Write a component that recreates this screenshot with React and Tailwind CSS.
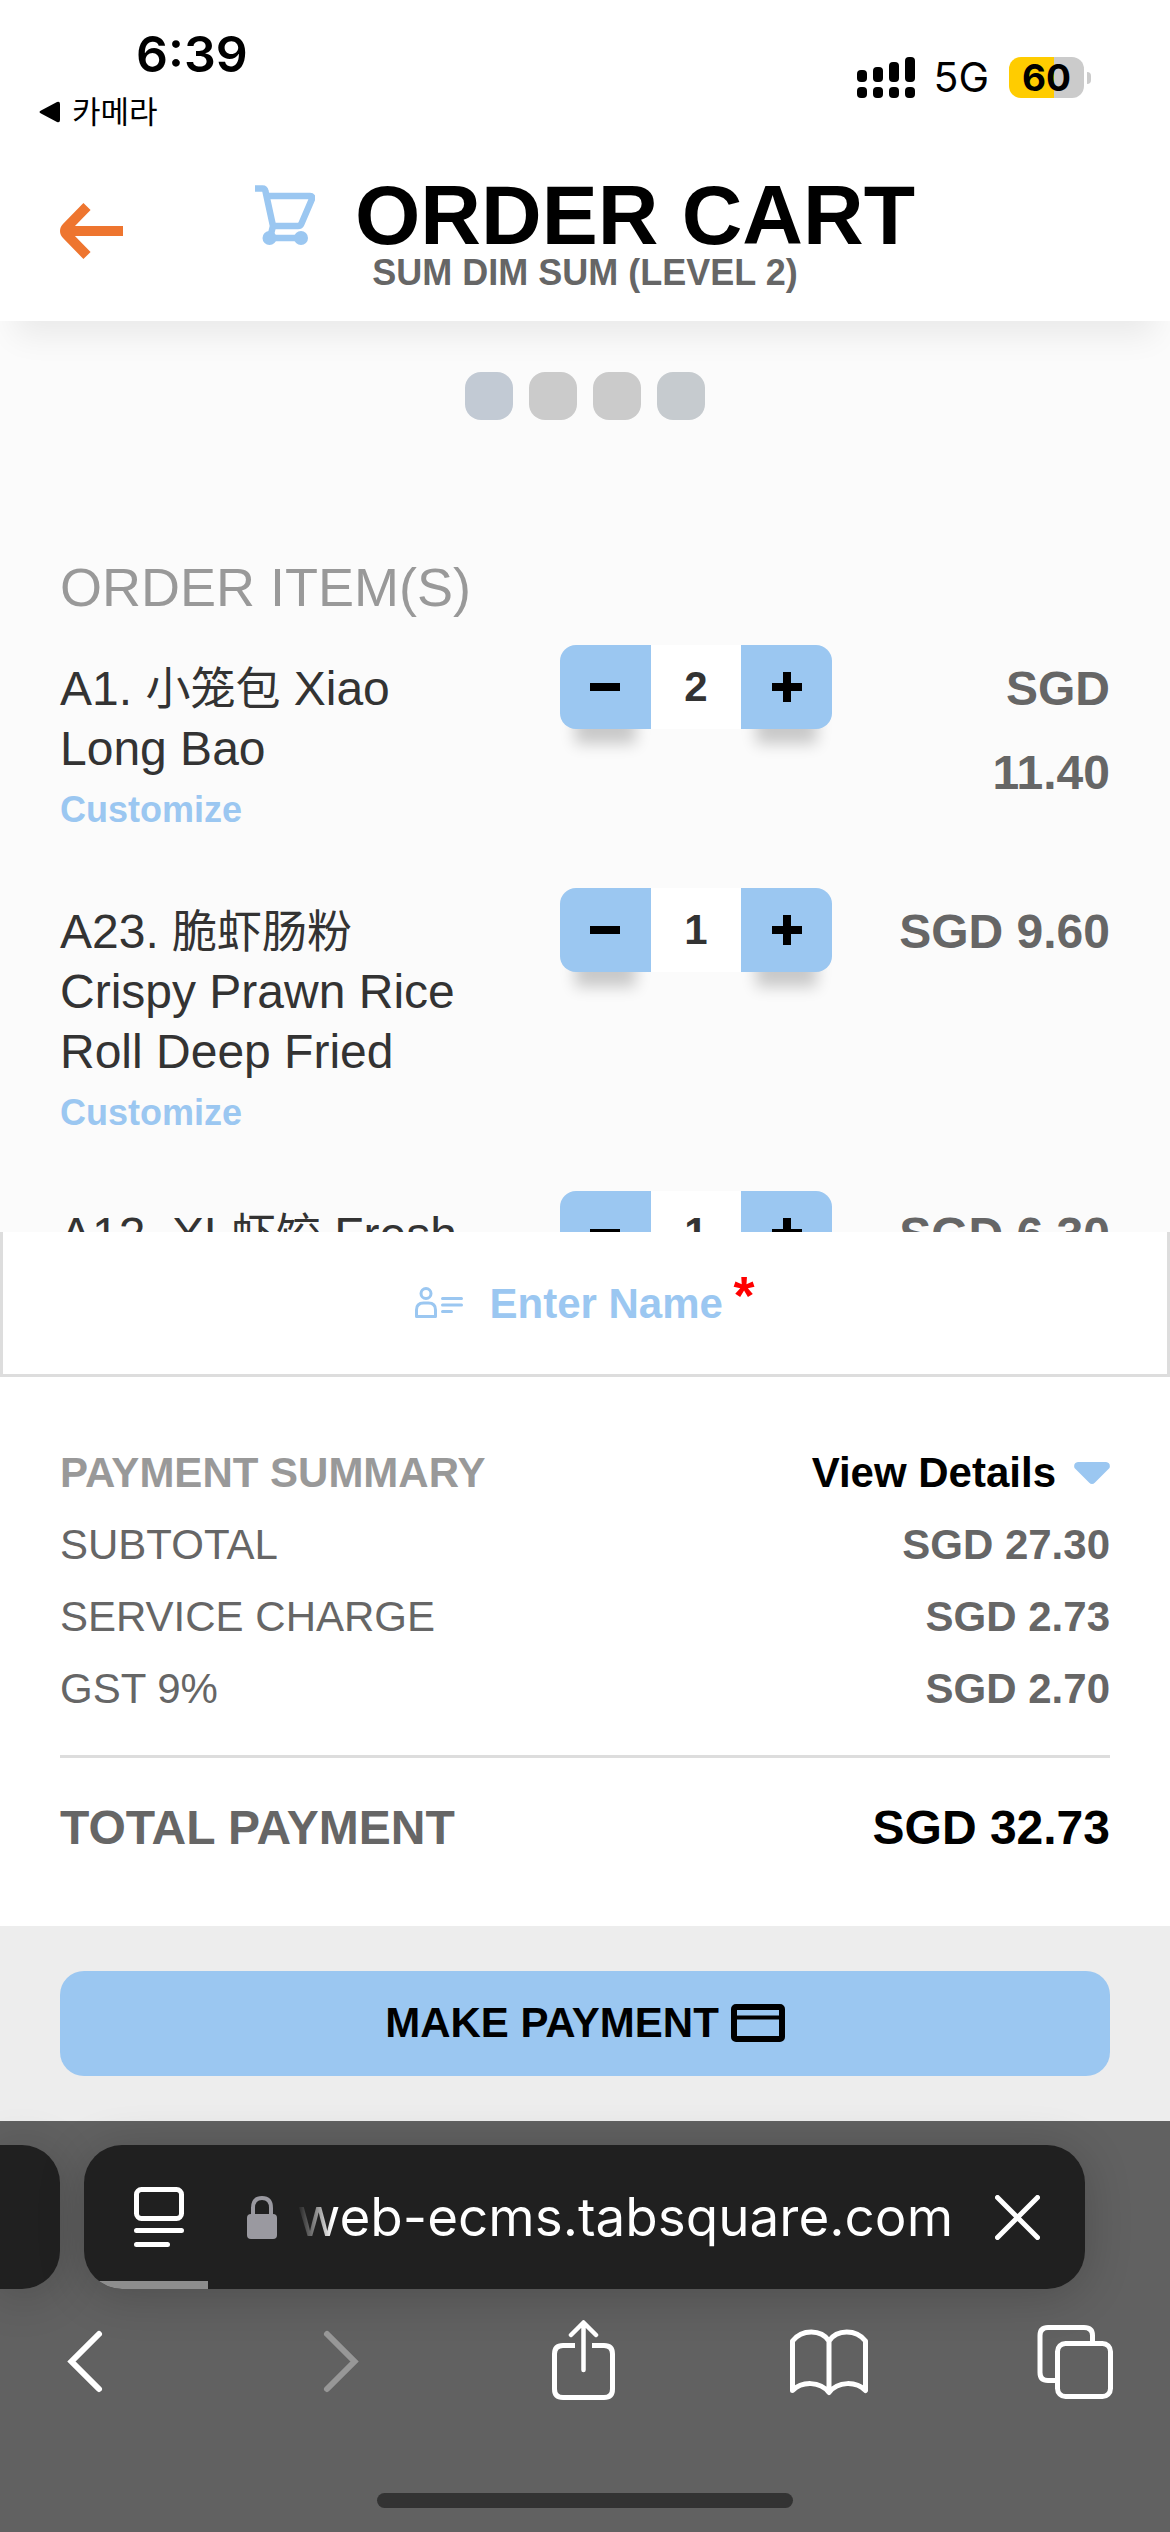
import React, { useState } from "react";

const initialItems = [
  {
    id: 1,
    code: "A1. ",
    chinese: "小笼包",
    english: " Xiao Long Bao",
    qty: 2,
    price: "SGD 11.40",
  },
  {
    id: 2,
    code: "A23. ",
    chinese: "脆虾肠粉",
    english: " Crispy Prawn Rice Roll Deep Fried",
    qty: 1,
    price: "SGD 9.60",
  },
  {
    id: 3,
    code: "A12. XL",
    chinese: "虾饺",
    english: " Fresh",
    qty: 1,
    price: "SGD 6.30",
  },
];

const charges = [
  { label: "SUBTOTAL", amount: "SGD 27.30" },
  { label: "SERVICE CHARGE", amount: "SGD 2.73" },
  { label: "GST 9%", amount: "SGD 2.70" },
];

function StatusBar() {
  return (
    <div className="flex items-start justify-between pb-12 font-['Inter','Noto_Sans_CJK_KR',sans-serif] text-black">
      <div className="pt-6">
        <div className="pl-[136px] text-[50px] leading-[60px] font-semibold">
          6:39
        </div>
        <a
          href="#camera"
          className="mt-2 flex items-center gap-3 pl-[39px] text-[31px] leading-[39px]"
        >
          <svg width="21" height="22" viewBox="0 0 21 22">
            <path d="M2 9.5 18 1q3-1 3 2v16q0 3-3 2L2 12.500q-3-1.500 0-3z" />
          </svg>
          카메라
        </a>
      </div>
      <div className="flex items-center pt-[57px] pr-[79px]">
        <svg width="58" height="41" viewBox="0 0 58 41">
          <rect x="0" y="13" width="10" height="12" rx="4" />
          <rect x="16" y="10" width="10" height="15" rx="4" />
          <rect x="32" y="5" width="10" height="20" rx="4" />
          <rect x="48" y="0" width="10" height="25" rx="4" />
          <rect x="0" y="30" width="10" height="11" rx="4" />
          <rect x="16" y="30" width="10" height="11" rx="4" />
          <rect x="32" y="30" width="10" height="11" rx="4" />
          <rect x="48" y="30" width="10" height="11" rx="4" />
        </svg>
        <span className="ml-[18px] text-[41px] leading-[41px]">5G</span>
        <div className="ml-5 flex h-[41px] w-[75px] items-center justify-center rounded-xl bg-linear-to-r from-[#ffcc00] from-60% to-[#cbcbcb] to-60% text-[37px] leading-[41px] font-bold">
          60
        </div>
        <div className="ml-[3px] h-3 w-1 rounded-r-full bg-[#cbcbcb]" />
      </div>
    </div>
  );
}

function Header() {
  return (
    <header className="relative z-10 bg-white shadow-[0_30px_30px_-15px_rgba(0,0,0,0.07)]">
      <StatusBar />
      <div className="grid grid-cols-[64px_1fr_64px] items-start px-[60px] pb-[30px]">
        <button
          type="button"
          aria-label="Back"
          className="flex h-[104px] items-center"
        >
          <svg width="64" height="58" viewBox="0 0 64 58" fill="none">
            <path
              d="M27 4.500 7 25q-4 4 0 8L27 53.500M7 29H63"
              stroke="#ee752f"
              strokeWidth="10"
            />
          </svg>
        </button>
        <div className="flex flex-col items-center">
          <div className="flex items-center gap-10 pb-1">
            <svg
              width="60"
              height="60"
              viewBox="0 0 60 60"
              fill="none"
              stroke="#9bc7f1"
              strokeWidth="6.500"
            >
              <path d="M0 3.500h7.500q2.500 0 3 3L18 41l-2 8" />
              <path d="M12 11H55q3 0 2 3L46.500 38.500q-1 2.500-3.500 2.500H18" />
              <path d="M14 53H46" />
              <circle cx="14.500" cy="53" r="7" fill="#9bc7f1" stroke="none" />
              <circle cx="46" cy="53" r="7" fill="#9bc7f1" stroke="none" />
            </svg>
            <h1 className="text-[84px] leading-[72px] font-bold whitespace-nowrap text-black">
              ORDER CART
            </h1>
          </div>
          <p className="text-4xl leading-[36px] font-bold text-[#666666]">
            SUM DIM SUM (LEVEL 2)
          </p>
        </div>
      </div>
    </header>
  );
}

function OrderItem({ item, onChange }) {
  return (
    <li className="grid grid-cols-[500px_272px_1fr] items-start pb-[47px]">
      <div className="pt-3.5 pr-16">
        <p className="text-5xl leading-[60px] text-[#333333]">
          {item.code}
          <span lang="zh" className="text-[45px] leading-[48px]">
            {item.chinese}
          </span>
          {item.english}
        </p>
        <button
          type="button"
          className="block text-4xl leading-[62px] font-bold text-[#9bc7f1]"
        >
          Customize
        </button>
      </div>
      <div className="grid h-[84px] grid-cols-3">
        <button
          type="button"
          aria-label="Decrease"
          onClick={() => onChange(item.id, -1)}
          className="flex items-center justify-center rounded-l-2xl bg-[#9bc7f1] shadow-[0_30px_15px_-15px_rgba(0,0,0,0.2)]"
        >
          <svg width="30" height="30" viewBox="0 0 30 30">
            <path d="M0 11h30v8H0z" />
          </svg>
        </button>
        <span className="bg-white text-center text-[42px] leading-[84px] font-bold text-[#333333]">
          {item.qty}
        </span>
        <button
          type="button"
          aria-label="Increase"
          onClick={() => onChange(item.id, 1)}
          className="flex items-center justify-center rounded-r-2xl bg-[#9bc7f1] shadow-[0_30px_15px_-15px_rgba(0,0,0,0.2)]"
        >
          <svg width="30" height="30" viewBox="0 0 30 30">
            <path d="M0 11h11V0h8v11h11v8H19v11h-8V19H0z" />
          </svg>
        </button>
      </div>
      <p className="pt-0.5 pl-[52px] text-right text-5xl leading-[84px] font-bold text-[#666666]">
        {item.price}
      </p>
    </li>
  );
}

function NameField({ value, onChange }) {
  return (
    <label className="flex h-[145px] items-center justify-center border-x-3 border-b-3 border-[#dddddd] bg-white">
      <svg
        width="48"
        height="32"
        viewBox="0 0 48 32"
        fill="none"
        stroke="#9bc7f1"
        strokeWidth="3"
        strokeLinecap="round"
        strokeLinejoin="round"
      >
        <circle cx="11" cy="6.500" r="5" />
        <path d="M1.500 29.500v-6.500q0-7 7-7h5q7 0 7 7v6.500zM27.500 11.500h19M27.500 18h19M27.500 24.500h9" />
      </svg>
      <input
        type="text"
        name="name"
        aria-label="Enter Name"
        placeholder="Enter Name"
        value={value}
        onChange={(e) => onChange(e.target.value)}
        className="ml-[26px] h-16 w-[236px] pt-0.5 text-[42px] font-bold text-[#333333] outline-none placeholder:text-[#9bc7f1] placeholder:opacity-100"
      />
      <span className="ml-2 pb-4 text-[54px] leading-[54px] font-bold text-[#ff0000]">
        *
      </span>
    </label>
  );
}

function PaymentSummary() {
  return (
    <section className="bg-white px-[60px] pt-[60px] pb-14">
      <div className="flex items-center justify-between text-[42px] leading-[72px] font-bold">
        <h2 className="text-[#999999]">PAYMENT SUMMARY</h2>
        <button type="button" className="flex items-center gap-[18px] text-black">
          View Details
          <svg width="36" height="22" viewBox="0 0 36 22" fill="#9bc7f1">
            <path d="M4 0H32q5 1 3.500 6L21 20.500q-3 3-6 0L.500 6Q-1 1 4 0z" />
          </svg>
        </button>
      </div>
      <dl>
        {charges.map((charge) => (
          <div
            key={charge.label}
            className="flex justify-between text-[42px] leading-[72px] text-[#666666]"
          >
            <dt>{charge.label}</dt>
            <dd className="font-bold">{charge.amount}</dd>
          </div>
        ))}
        <div className="mt-[30px] flex justify-between border-t-3 border-[#dddddd] pt-7 text-5xl leading-[84px] font-bold">
          <dt className="text-[#666666]">TOTAL PAYMENT</dt>
          <dd className="text-black">SGD 32.73</dd>
        </div>
      </dl>
    </section>
  );
}

function BrowserBar() {
  return (
    <footer className="bg-[#616161] pt-6 pb-6 font-['Inter',sans-serif]">
      <div className="flex gap-6 pr-[85px]">
        <div className="h-36 w-[60px] rounded-r-[38px] bg-[#202020] shadow-[0_6px_48px_rgba(0,0,0,0.2)]" />
        <div className="flex h-36 flex-1 flex-col overflow-hidden rounded-[38px] bg-[#202020] shadow-[0_6px_48px_rgba(0,0,0,0.2)]">
          <div className="flex flex-1 items-center pt-2 pr-[45px] pl-[50px]">
            <button type="button" aria-label="Page settings">
              <svg
                width="50"
                height="60"
                viewBox="0 0 50 60"
                fill="none"
                stroke="white"
                strokeWidth="5"
                strokeLinecap="round"
              >
                <rect x="2.500" y="2.500" width="45" height="29" rx="5" />
                <path d="M2.500 43.500H47.500M2.500 57.500H33.500" />
              </svg>
            </button>
            <svg
              className="ml-[63px]"
              width="30"
              height="43"
              viewBox="0 0 30 43"
            >
              <rect y="18" width="30" height="25" rx="4" fill="#9a99a0" />
              <path
                d="M6 19v-7q0-10 9-10t9 10v7"
                fill="none"
                stroke="#9a99a0"
                strokeWidth="4"
              />
            </svg>
            <span className="ml-5 flex-1 bg-linear-to-r from-[#202020] to-white to-[36px] bg-clip-text text-[53px] leading-[64px] whitespace-nowrap text-transparent">
              web-ecms.tabsquare.com
            </span>
            <button type="button" aria-label="Stop loading">
              <svg
                width="45"
                height="45"
                viewBox="0 0 45 45"
                stroke="white"
                strokeWidth="5"
                strokeLinecap="round"
              >
                <path d="M2.500 2.500 42.500 42.500M42.500 2.500 2.500 42.500" />
              </svg>
            </button>
          </div>
          <div className="h-2 w-[124px] bg-[#8d8d8d]" />
        </div>
      </div>

      <nav className="flex justify-between pt-[31px] pr-[55px] pl-[45px]">
        <button type="button" aria-label="Previous page">
          <svg width="80" height="80" viewBox="0 0 80 80" fill="none" stroke="white" strokeWidth="6" strokeLinecap="round">
            <path d="M54 14 26.500 41.500 54 69" />
          </svg>
        </button>
        <button type="button" aria-label="Next page" disabled>
          <svg width="80" height="80" viewBox="0 0 80 80" fill="none" stroke="#979797" strokeWidth="6" strokeLinecap="round">
            <path d="M34 14 61.500 41.500 34 69" />
          </svg>
        </button>
        <button type="button" aria-label="Share">
          <svg width="80" height="80" viewBox="0 0 80 80" fill="none" stroke="white" strokeWidth="5">
            <path d="M35 25.500H23q-8.500 0-8.500 8.500V69q0 8.500 8.500 8.500H64q8.500 0 8.500-8.500V34q0-8.500-8.500-8.500H52" />
            <path
              d="M43.500 3V50M31 15 43.500 2.500 56 15"
              strokeWidth="4.500"
              strokeLinecap="round"
              strokeLinejoin="round"
            />
          </svg>
        </button>
        <button type="button" aria-label="Bookmarks">
          <svg width="80" height="80" viewBox="0 0 80 80" fill="none" stroke="white" strokeWidth="5" strokeLinecap="round" strokeLinejoin="round">
            <path d="M41 21C33 9 14 9 4.500 21V70.500C14 61 32 61 41 72.500 50 61 68 61 77.500 70.500V21C68 9 49 9 41 21V72" />
          </svg>
        </button>
        <button type="button" aria-label="Tabs">
          <svg width="80" height="80" viewBox="0 0 80 80" fill="none" stroke="white" strokeWidth="5">
            <path d="M20 60.500H13q-8 0-8-8V15.500q0-8 8-8H49q8.500 0 8.500 8V22" />
            <rect x="22.500" y="23.500" width="53" height="53" rx="8" />
          </svg>
        </button>
      </nav>

      <div className="mx-auto mt-[93px] h-[15px] w-[416px] rounded-full bg-[#333333]" />
    </footer>
  );
}

export default function App() {
  const [items, setItems] = useState(initialItems);
  const [name, setName] = useState("");

  function handleQtyChange(id, step) {
    setItems((prev) =>
      prev.map((item) =>
        item.id === id ? { ...item, qty: Math.max(0, item.qty + step) } : item
      )
    );
  }

  return (
    <div className="flex h-screen flex-col bg-white font-['Liberation_Sans','Noto_Sans_CJK_SC',sans-serif]">
      <Header />

      <main className="min-h-0 flex-1 overflow-hidden bg-[#fbfbfb] px-[60px] pt-[51px]">
        <div className="flex justify-center gap-4">
          <span className="size-12 rounded-2xl bg-[#c2cad4]" />
          <span className="size-12 rounded-2xl bg-[#cbcbcb]" />
          <span className="size-12 rounded-2xl bg-[#cbcbcb]" />
          <span className="size-12 rounded-2xl bg-[#c6cbcf]" />
        </div>
        <h2 className="pt-[137px] pb-7 text-[54px] leading-[60px] text-[#999999]">
          ORDER ITEM(S)
        </h2>
        <ul>
          {items.map((item) => (
            <OrderItem key={item.id} item={item} onChange={handleQtyChange} />
          ))}
        </ul>
      </main>

      <NameField value={name} onChange={setName} />
      <PaymentSummary />
      <div className="bg-[#ededed] px-[60px] py-[45px]">
        <button
          type="button"
          className="flex h-[105px] w-full items-center justify-center gap-3 rounded-3xl bg-[#9bc7f1] pb-0.5 text-[42px] font-bold text-black"
        >
          MAKE PAYMENT
          <svg width="54" height="38" viewBox="0 0 54 38" fill="none" stroke="black">
            <rect x="3" y="3" width="48" height="32" rx="2" strokeWidth="6" />
            <path d="M4 13.500H50" strokeWidth="4" />
          </svg>
        </button>
      </div>
      <BrowserBar />
    </div>
  );
}
